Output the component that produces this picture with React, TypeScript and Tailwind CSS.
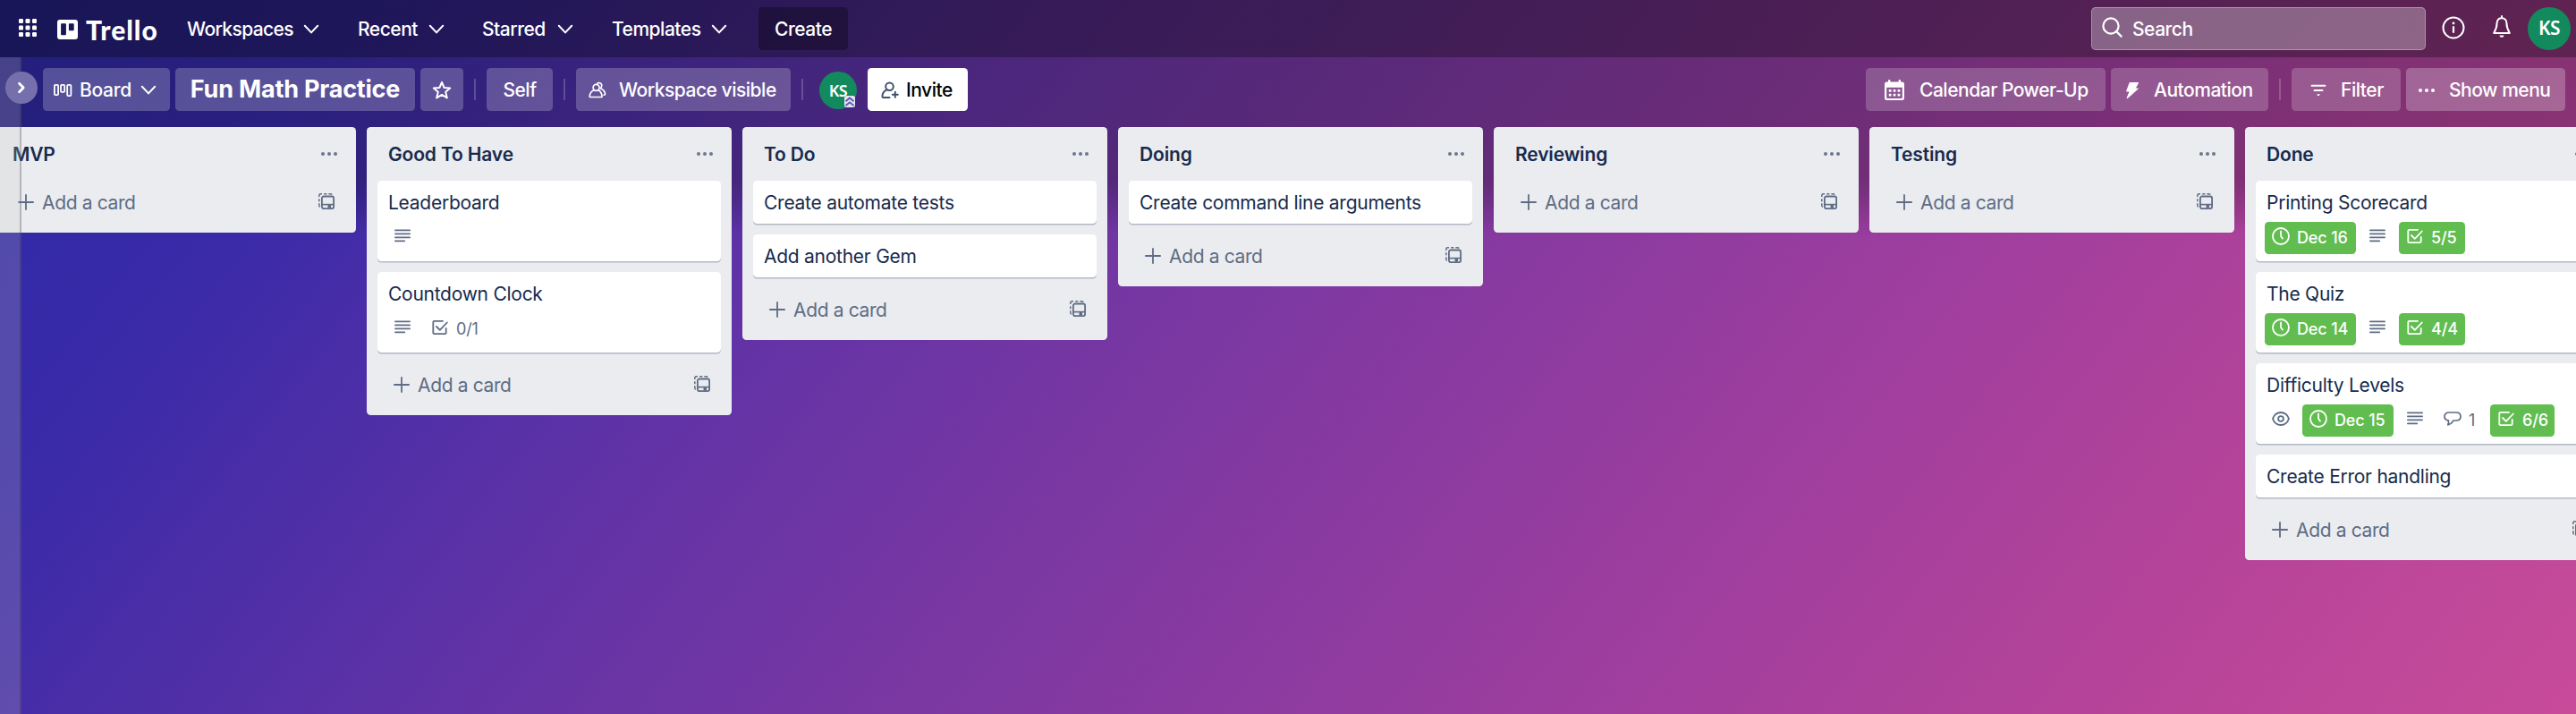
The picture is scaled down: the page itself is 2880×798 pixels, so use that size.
import type { ReactNode } from "react";

type IconProps = { className?: string };

function Chevron({ className = "" }: IconProps) {
  return (
    <svg viewBox="0 0 18 12" fill="none" stroke="currentColor" strokeWidth="2" strokeLinecap="round" strokeLinejoin="round" className={`h-3 w-[18px] shrink-0 ${className}`}>
      <path d="M1.8 1.8 9 9.4l7.2-7.6" />
    </svg>
  );
}

function AppsIcon() {
  return (
    <svg viewBox="0 0 20 20" fill="currentColor" className="-mt-0.5 h-5 w-5 shrink-0">
      {[0, 7.5, 15].map((y) => [0, 7.5, 15].map((x) => <rect key={`${x}-${y}`} x={x} y={y} width="5" height="5" rx="1.2" />))}
    </svg>
  );
}

function TrelloMark() {
  return (
    <svg viewBox="0 0 23 22" fill="currentColor" fillRule="evenodd" className="mt-0.5 h-[22px] w-[23px] shrink-0">
      <path d="M3 0h17a3 3 0 0 1 3 3v16a3 3 0 0 1-3 3H3a3 3 0 0 1-3-3V3a3 3 0 0 1 3-3Zm2 4.2a.9.9 0 0 0-.9.9v11.2c0 .5.4.9.9.9h4a.9.9 0 0 0 .9-.9V5.1a.9.9 0 0 0-.9-.9H5Zm8.8 0a.9.9 0 0 0-.9.9v6.2c0 .5.4.9.9.9h4a.9.9 0 0 0 .9-.9V5.1a.9.9 0 0 0-.9-.9h-4Z" />
    </svg>
  );
}

function SearchIcon() {
  return (
    <svg viewBox="0 0 24 24" fill="none" stroke="currentColor" strokeWidth="2.2" strokeLinecap="round" className="-mt-0.5 h-6 w-6 shrink-0">
      <circle cx="10" cy="10" r="8.6" />
      <path d="m16.4 16.4 5.2 5.2" />
    </svg>
  );
}

function InfoIcon() {
  return (
    <svg viewBox="0 0 26 26" fill="none" stroke="currentColor" strokeWidth="2" strokeLinecap="round" className="h-[26px] w-[26px] shrink-0">
      <circle cx="13" cy="13" r="11.5" />
      <path d="M13 12v6" strokeWidth="2.2" />
      <circle cx="13" cy="8" r="1.4" fill="currentColor" stroke="none" />
    </svg>
  );
}

function BellIcon() {
  return (
    <svg viewBox="0 0 22 26" fill="none" stroke="currentColor" strokeWidth="2" strokeLinejoin="round" className="h-[26px] w-[22px] shrink-0">
      <path d="M11 3.2c-3.5 0-5.4 2.5-5.4 5.6 0 5-1.2 7.4-3.4 11.2h17.6c-2.2-3.8-3.4-6.2-3.4-11.2 0-3.1-1.9-5.6-5.4-5.6Z" />
      <path d="M11 1v2" strokeLinecap="round" />
      <path d="M8.5 22.5h5a2.5 2.3 0 0 1-5 0Z" fill="currentColor" stroke="none" />
    </svg>
  );
}

function BoardIcon() {
  return (
    <svg viewBox="0 0 21 14" fill="none" stroke="currentColor" strokeWidth="1.8" className="h-[14px] w-[21px] shrink-0">
      <rect x="0.9" y="0.9" width="4.2" height="11.2" rx="1.2" />
      <rect x="8" y="0.9" width="4.2" height="8" rx="1.2" />
      <rect x="15.2" y="0.9" width="4.2" height="12.2" rx="1.2" />
    </svg>
  );
}

function StarIcon() {
  return (
    <svg viewBox="0 0 22 22" fill="none" stroke="currentColor" strokeWidth="2" strokeLinejoin="round" className="h-[22px] w-[22px] shrink-0">
      <path d="m11 1.8 2.6 6.2 6.6.5-5 4.3 1.6 6.6-5.8-3.5-5.8 3.5 1.6-6.6-5-4.3 6.6-.5Z" />
    </svg>
  );
}

function PeopleIcon() {
  return (
    <svg viewBox="0 0 20 20" fill="none" stroke="currentColor" strokeWidth="1.7" strokeLinejoin="round" strokeLinecap="round" className="h-5 w-5 shrink-0">
      <circle cx="8.6" cy="6.8" r="3.5" />
      <path d="M5.9 9.8C3 11 1.5 13.4 1.2 16.8c0 .5.2.7.7.7h12.6c.5 0 .7-.3.6-.8-.4-3.5-1.6-5.6-4-6.9" />
      <path d="M9.8 2.2c1.5-1.3 4.8-.6 5 2.2.1 1.7-.6 2.6-1.5 3.4 2.6 1 4.8 2.7 5.3 6.2 0 .8-.4 1.2-1.4 1.2" />
    </svg>
  );
}

function InviteIcon() {
  return (
    <svg viewBox="0 0 20 20" fill="none" stroke="currentColor" strokeWidth="2" strokeLinecap="round" strokeLinejoin="round" className="h-5 w-5 shrink-0">
      <circle cx="9.5" cy="5.8" r="4.3" />
      <path d="M6.6 9.4C3.4 10.6 1.6 13 1.4 16.7c0 .8.3 1.200 1.100 1.200h7" />
      <path d="M15.8 11.8v6M12.8 14.8h6" />
    </svg>
  );
}

function CalendarIcon() {
  return (
    <svg viewBox="0 0 24 24" fill="currentColor" fillRule="evenodd" className="h-6 w-6 shrink-0">
      <path d="M5 1.2a1.2 1.2 0 0 1 2.4 0V2.5h9.2V1.2a1.2 1.2 0 0 1 2.4 0V2.5h1.5a2.5 2.5 0 0 1 2.5 2.5v15.5a2.5 2.5 0 0 1-2.5 2.5h-17A2.5 2.5 0 0 1 1 20.5V5a2.5 2.5 0 0 1 2.5-2.5H5Zm-1.8 7.6v11.4c0 .5.4.8.8.8h16c.5 0 .8-.3.8-.8V8.8Z" />
      {[11, 15.8].map((y) => [5.8, 10.7, 15.6].map((x) => <rect key={`${x}-${y}`} x={x} y={y} width="2.7" height="2.7" />))}
    </svg>
  );
}

function BoltIcon() {
  return (
    <svg viewBox="0 0 16 20" fill="currentColor" className="h-5 w-4 shrink-0">
      <path d="M5.3 1h9.2c.5 0 .7.4.5.8L11.8 7.5h2.3c.6 0 .8.5.4 1L3 18.8c-.8.7-1.6.2-1.2-.7l2.7-6.6H1.800c-.6 0-.8-.4-.6-.9L4.600 1.500c.1-.3.3-.5.7-.5Z" />
    </svg>
  );
}

function FilterIcon() {
  return (
    <svg viewBox="0 0 18 14" fill="none" stroke="currentColor" strokeWidth="1.9" strokeLinecap="round" className="h-[14px] w-[18px] shrink-0">
      <path d="M1.5 1.8h15M4.5 7h9" />
      <path d="M7.2 11.3h3.6L9.8 12.900H8.200Z" fill="currentColor" stroke="none" />
    </svg>
  );
}

function Dots({ className = "" }: IconProps) {
  return (
    <svg viewBox="0 0 18 4" fill="currentColor" className={`h-1 w-[18px] shrink-0 ${className}`}>
      <circle cx="2" cy="2" r="2" />
      <circle cx="9" cy="2" r="2" />
      <circle cx="16" cy="2" r="2" />
    </svg>
  );
}

function PlusIcon() {
  return (
    <svg viewBox="0 0 18 18" fill="none" stroke="currentColor" strokeWidth="1.8" strokeLinecap="round" className="h-[18px] w-[18px] shrink-0">
      <path d="M9 .9v16.2M.9 9h16.2" />
    </svg>
  );
}

function TemplateIcon() {
  return (
    <svg viewBox="0 0 18 18" fill="none" stroke="currentColor" className="h-[18px] w-[18px] shrink-0">
      <rect x="3.9" y="3.5" width="13.2" height="13.6" rx="2" strokeWidth="1.8" />
      <path d="M3.5 12.6h14" strokeWidth="1.6" />
      <path d="M11 13.4h2.5v2.7H11z" strokeWidth="1" fill="currentColor" />
      <path d="M.8 4V2.5C.8 1.5 1.5.8 2.5.8H4M6.2.8h3.200M11.400.8h2c.8 0 1.400.3 1.800.9M.8 6.200v3M.8 11.200v2.400c0 .8.400 1.400 1 1.800" strokeWidth="1.5" />
    </svg>
  );
}

function DescriptionIcon() {
  return (
    <svg viewBox="0 0 18 15" fill="none" stroke="currentColor" strokeWidth="1.8" strokeLinecap="round" className="h-[15px] w-[18px] shrink-0">
      <path d="M.9 1.300h16.200M.9 5.300h16.200M.9 9.300h16.200M.9 13.300h10.400" />
    </svg>
  );
}

function ChecklistIcon() {
  return (
    <svg viewBox="0 0 18 18" fill="none" stroke="currentColor" strokeWidth="1.8" strokeLinecap="round" strokeLinejoin="round" className="h-[18px] w-[18px] shrink-0">
      <path d="M12 1.800H2.500c-.7 0-1.200.5-1.200 1.200v12c0 .7.5 1.200 1.200 1.200h12c.7 0 1.200-.5 1.200-1.200V9.800" />
      <path d="m5 8 3.800 3.900 8-8.400" />
    </svg>
  );
}

function ClockIcon() {
  return (
    <svg viewBox="0 0 20 20" fill="none" stroke="currentColor" strokeWidth="1.8" strokeLinecap="round" strokeLinejoin="round" className="h-5 w-5 shrink-0">
      <circle cx="10" cy="10" r="9" />
      <path d="M10 4.500V10l2 2.600" />
    </svg>
  );
}

function EyeIcon() {
  return (
    <svg viewBox="0 0 20 16" fill="none" stroke="currentColor" strokeWidth="1.8" className="h-4 w-5 shrink-0">
      <path d="M1 8c1.300-3.700 4.500-7 9-7s7.700 3.300 9 7c-1.300 3.700-4.500 7-9 7S2.300 11.700 1 8Z" />
      <circle cx="10" cy="8" r="2.9" />
    </svg>
  );
}

function CommentIcon() {
  return (
    <svg viewBox="0 0 20 16" fill="none" stroke="currentColor" strokeWidth="1.7" strokeLinejoin="round" className="h-4 w-5 shrink-0">
      <path d="M6 1h8c3 0 5 1.700 5 4.500S17 10 14 10h-3.200c-1.200 2.500-3.200 4.200-6 4.900.9-1.700 1-3.300.5-5C2.500 9.500 1 8 1 5.500 1 2.700 3 1 6 1Z" />
    </svg>
  );
}

function AdminBadge() {
  return (
    <svg viewBox="0 0 12 13" fill="none" className="absolute right-0.5 bottom-0.5 h-[13px] w-3">
      <rect width="12" height="13" rx="2.5" fill="#e4e3f0" />
      <path d="m1.5 6.200 4.500-3.700 4.500 3.700M1.500 11l4.500-3.700 4.500 3.700" stroke="#5b53b4" strokeWidth="1.8" />
    </svg>
  );
}

type CardData = {
  title: string;
  watch?: boolean;
  due?: string;
  description?: boolean;
  comments?: string;
  checklist?: string;
  done?: boolean;
};

const lists: { title: string; cards: CardData[] }[] = [
  { title: "MVP", cards: [] },
  {
    title: "Good To Have",
    cards: [
      { title: "Leaderboard", description: true },
      { title: "Countdown Clock", description: true, checklist: "0/1" },
    ],
  },
  { title: "To Do", cards: [{ title: "Create automate tests" }, { title: "Add another Gem" }] },
  { title: "Doing", cards: [{ title: "Create command line arguments" }] },
  { title: "Reviewing", cards: [] },
  { title: "Testing", cards: [] },
  {
    title: "Done",
    cards: [
      { title: "Printing Scorecard", due: "Dec 16", description: true, checklist: "5/5", done: true },
      { title: "The Quiz", due: "Dec 14", description: true, checklist: "4/4", done: true },
      { title: "Difficulty Levels", watch: true, due: "Dec 15", description: true, comments: "1", checklist: "6/6", done: true },
      { title: "Create Error handling" },
    ],
  },
];

function Badge({ icon, text, green, className = "" }: { icon: ReactNode; text?: string; green?: boolean; className?: string }) {
  return (
    <div className={`flex h-9 items-center rounded-[4.5px] ${green ? "bg-[#61bd4f] font-medium text-white" : "text-[#5e6c84]"} ${className}`}>
      <span className="flex h-[31px] w-9 shrink-0 items-center justify-center self-start pr-px">{icon}</span>
      {text && <span className="text-[18px] leading-9 tracking-[-0.15px] whitespace-nowrap">{text}</span>}
    </div>
  );
}

function Card({ card }: { card: CardData }) {
  const hasBadges = card.description || card.due || card.checklist;
  return (
    <div className={`rounded-[4.5px] bg-white shadow-[0_1.5px_0_#091e4240] ${hasBadges ? "h-[90px]" : "h-12"}`}>
      <div className="px-3 pt-2.5 text-[21px] leading-[30px] tracking-[-0.26px] whitespace-nowrap">{card.title}</div>
      {hasBadges && (
        <div className="mt-1.5 flex gap-1.5 pl-2.5">
          {card.watch && <Badge icon={<EyeIcon />} className="w-9" />}
          {card.due && <Badge icon={<ClockIcon />} text={card.due} green className="w-[102px]" />}
          {card.description && <Badge icon={<DescriptionIcon />} className="w-9" />}
          {card.comments && <Badge icon={<CommentIcon />} text={card.comments} className="w-[54px]" />}
          {card.checklist && <Badge icon={<ChecklistIcon />} text={card.checklist} green={card.done} className={card.watch ? "w-[72px]" : "w-[74px]"} />}
        </div>
      )}
    </div>
  );
}

function List({ title, cards }: { title: string; cards: CardData[] }) {
  return (
    <section className="w-[408px] shrink-0 rounded-[4.5px] bg-[#ebecf0]">
      <header className="flex h-[60px] items-start justify-between pr-[21px] pl-6">
        <h2 className="pt-4 text-[21px] leading-[30px] font-semibold tracking-[-0.15px]">{title}</h2>
        <Dots className="mt-7 text-[#6b778c]" />
      </header>
      <div className="flex flex-col gap-3 px-3">
        {cards.map((card) => <Card key={card.title} card={card} />)}
      </div>
      <div className={`flex h-[58px] items-start pr-6 pl-[30px] text-[#5e6c84] ${cards.length ? "mt-3" : ""}`}>
        <span className="mt-[15px]"><PlusIcon /></span>
        <span className="ml-[9px] pt-2.5 text-[21px] leading-[30px] tracking-[-0.36px]">Add a card</span>
        <span className="mt-[14px] ml-auto"><TemplateIcon /></span>
      </div>
    </section>
  );
}

function NavItem({ label, className }: { label: string; className: string }) {
  return (
    <div className={`flex h-full shrink-0 items-center justify-between ${className}`}>
      <span className="pt-px">{label}</span>
      <Chevron className="mt-0.5" />
    </div>
  );
}

function Divider() {
  return <div className="mx-3 h-6 w-0.5 shrink-0 bg-white/20" />;
}

function HeaderButton({ className, children }: { className: string; children: ReactNode }) {
  return <div className={`flex h-12 shrink-0 items-center rounded-[4.5px] pt-px ${className}`}>{children}</div>;
}

export default function App() {
  return (
    <div className="relative flex h-[798px] w-[2880px] flex-col overflow-hidden bg-[linear-gradient(128deg,#2e29a6_0%,#382aa8_11.8%,#6233a6_32%,#8239a1_51.1%,#a33f9e_71.1%,#b34399_82.5%,#c84b9a_100%)] font-['Inter','Liberation_Sans',sans-serif] text-[21px] text-[#172b4d]">
      <div className="pointer-events-none absolute inset-0 bg-[linear-gradient(180deg,#00000040_0,#00000040_200px,#00000030_220px,#00000000_264px)]" />

      <nav className="relative flex h-16 shrink-0 items-center bg-black/29 pl-[21px] font-medium tracking-[-0.48px] text-white">
        <AppsIcon />
        <div className="ml-[23px] flex items-center">
          <TrelloMark />
          <span className="ml-[9px] w-[113px] pt-0.5 font-['Lato'] text-[30px] leading-none font-black tracking-[1px]">Trello</span>
        </div>
        <NavItem label="Workspaces" className="w-[148px] tracking-[-0.6px]" />
        <NavItem label="Recent" className="ml-[43px] w-[97px]" />
        <NavItem label="Starred" className="ml-[42px] w-[102px]" />
        <NavItem label="Templates" className="ml-[43px] w-[129px]" />
        <div className="ml-[35px] flex h-12 w-[100px] items-center justify-center rounded-[4.5px] bg-black/30 pt-px"><span>Create</span></div>
        <div className="ml-auto flex h-12 w-[374px] items-center rounded-[5px] border-[1.5px] border-white/30 bg-white/30 pl-[11px]">
          <SearchIcon />
          <span className="ml-2.5 pt-px">Search</span>
        </div>
        <span className="-mt-0.5 ml-[18px]"><InfoIcon /></span>
        <span className="-mt-1 ml-[30px]"><BellIcon /></span>
        <div className="mr-1.5 ml-[18px] flex h-12 w-12 items-center justify-center rounded-full bg-[#138a5e] font-['Noto_Sans'] text-[21px] font-semibold"><span>KS</span></div>
      </nav>

      <div className="relative flex h-[78px] shrink-0 items-center pr-3 pb-1.5 pl-12 font-medium tracking-[-0.48px] text-white">
        <HeaderButton className="w-[142px] bg-white/22 pl-3"><BoardIcon /><span className="ml-2 tracking-[-0.3px]">Board</span><Chevron className="mr-[15px] ml-auto" /></HeaderButton>
        <HeaderButton className="ml-1.5 w-[268px] justify-center bg-white/22"><h1 className="text-[27px] font-bold tracking-[-0.2px]">Fun Math Practice</h1></HeaderButton>
        <HeaderButton className="ml-1.5 w-12 justify-center bg-white/22"><StarIcon /></HeaderButton>
        <Divider />
        <HeaderButton className="w-[74px] justify-center bg-white/22"><span>Self</span></HeaderButton>
        <Divider />
        <HeaderButton className="w-[240px] bg-white/22 pl-[14px]"><PeopleIcon /><span className="ml-[14px]">Workspace visible</span></HeaderButton>
        <Divider />
        <div className="relative mt-0.5 ml-1.5 flex h-[42px] w-[42px] items-center justify-center rounded-full bg-[#138a5e] font-['Noto_Sans'] text-[18px] font-semibold">
          <span>KS</span>
          <AdminBadge />
        </div>
        <HeaderButton className="ml-3 w-[112px] bg-white pl-[15px] text-[#42526e]"><InviteIcon /><span className="ml-2 text-black">Invite</span></HeaderButton>
        <HeaderButton className="ml-auto w-[268px] bg-white/20 pl-5"><CalendarIcon /><span className="ml-4">Calendar Power-Up</span></HeaderButton>
        <HeaderButton className="ml-1.5 w-[176px] bg-white/20 pl-4"><BoltIcon /><span className="ml-4">Automation</span></HeaderButton>
        <Divider />
        <HeaderButton className="w-[122px] bg-white/20 pl-[21px]"><FilterIcon /><span className="ml-4">Filter</span></HeaderButton>
        <HeaderButton className="ml-1.5 w-[178px] bg-white/25 pl-[14px]"><Dots /><span className="ml-4">Show menu</span></HeaderButton>
      </div>

      <main className="relative -ml-2.5 flex items-start gap-3">
        {lists.map((list) => <List key={list.title} {...list} />)}
      </main>

      <aside className="absolute top-16 bottom-0 left-0 w-6 border-r-2 border-[#62626a]/40 bg-[#c5c5c3]/21 bg-clip-padding">
        <div className="absolute top-4 left-1.5 flex h-9 w-9 items-center justify-center rounded-full bg-[#756fab] text-white">
          <svg viewBox="0 0 10 14" fill="none" stroke="currentColor" strokeWidth="2.8" strokeLinecap="round" strokeLinejoin="round" className="h-[14px] w-2.5">
            <path d="m2.5 2.3 4.7 4.7-4.7 4.7" />
          </svg>
        </div>
      </aside>
    </div>
  );
}
